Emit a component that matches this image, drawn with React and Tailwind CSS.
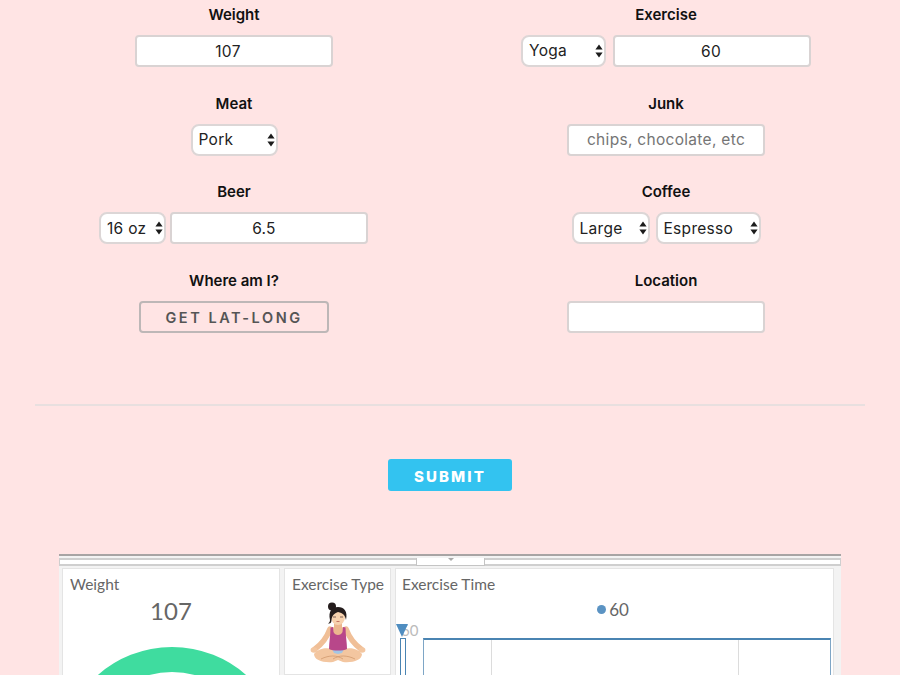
import React from 'react';

const inputClass = 'h-[32px] rounded-[4px] border-2 border-[#d9d3d3] bg-white text-center text-[15.5px] tracking-[0.3px] text-[#222] outline-none placeholder:text-[#757575]';

const Select = ({ value, width }) => (
  <div className={`relative h-[32px] ${width}`}>
    <select
      defaultValue={value}
      className="h-full w-full appearance-none rounded-[8px] border-2 border-[#dcd6d6] bg-white pl-[6px] text-[15.5px] tracking-[0.3px] text-[#222] outline-none"
    >
      <option>{value}</option>
    </select>
    <svg className="absolute right-[3px] top-[9px] h-[14px] w-[8px]" viewBox="0 0 8 14">
      <path d="M4 0.5 L7.6 5.5 L0.4 5.5 Z M4 13.5 L7.6 8.5 L0.4 8.5 Z" fill="#1c1c1c" />
    </svg>
  </div>
);

const Field = ({ label, children }) => (
  <div className="flex h-[88.67px] flex-col items-center">
    <label className="h-[35px] text-[15px] font-semibold leading-[29px] text-[#111]">{label}</label>
    <div className="flex items-center">{children}</div>
  </div>
);

const YogaGirl = () => (
  <svg className="h-[66px] w-[64px]" viewBox="0 0 64 66">
    {/* arms */}
    <path d="M25 30 C22 38 17 45 10 50" stroke="#f0bf97" strokeWidth="5.5" strokeLinecap="round" fill="none" />
    <path d="M41 30 C44 38 49 45 56 50" stroke="#f0bf97" strokeWidth="5.5" strokeLinecap="round" fill="none" />
    {/* legs */}
    <path d="M9 55 C16 47 26 49 33 52 C40 49 50 47 57 55 C57 61 48 64 38 63 L33 61 L28 63 C18 64 9 61 9 55 Z" fill="#f3c6a0" />
    <path d="M16 60 C24 56 32 56 38 60 M50 60 C42 56 34 56 28 60" stroke="#d29a70" strokeWidth="0.8" fill="none" />
    {/* hands */}
    <ellipse cx="9" cy="51" rx="3.4" ry="2.8" fill="#f3c6a0" />
    <ellipse cx="57" cy="51" rx="3.4" ry="2.8" fill="#f3c6a0" />
    {/* shorts */}
    <path d="M27 50 H39 L37 54 L33 55 L29 54 Z" fill="#a3c6e4" />
    {/* neck and chest */}
    <path d="M29 23 H37 V28 L41 30 V36 H25 V30 L29 28 Z" fill="#ecb78e" />
    {/* top */}
    <path d="M25.5 28.5 L28 28 L28.5 33 C30 37 36 37 37.5 33 L38 28 L40.5 28.5 C40.5 36 42 44 42 50 C38 52 28 52 24 50 C24 44 25.5 36 25.5 28.5 Z" fill="#b8478a" />
    {/* head */}
    <ellipse cx="33" cy="18" rx="7" ry="8" fill="#f7d2ae" />
    {/* hair */}
    <circle cx="27" cy="7.5" r="4" fill="#241c1c" />
    <path d="M25 21 C23 12 27 8 33 8 C39 8 43 12 41 21 C40 16 38 14 33 13 C30 14 27 16 26.5 21 C26.5 23 26 25 23 24.5 C24.5 23.5 25 22.5 25 21 Z" fill="#241c1c" />
    <path d="M28 18 h3 M35 18 h3" stroke="#4a3030" strokeWidth="0.7" />
    <path d="M31.5 22.5 h3" stroke="#c06a5a" strokeWidth="0.9" />
  </svg>
);

const Gauge = () => (
  <svg className="mt-[9px] h-[60px] w-[216px]" viewBox="0 0 216 60">
    <circle cx="109" cy="124" r="99.5" fill="none" stroke="#3fdc9f" strokeWidth="25" />
  </svg>
);

const App = () => {
  return (
    <div className="h-[675px] w-[900px] overflow-hidden bg-[#ffe4e4] font-['Inter','Liberation_Sans',sans-serif]">
      <div className="ml-[18px] grid w-[864px] grid-cols-2">
        <Field label="Weight">
          <input className={`${inputClass} w-[198px] pr-[12px]`} defaultValue="107" />
        </Field>
        <Field label="Exercise">
          <Select value="Yoga" width="w-[85px]" />
          <input className={`${inputClass} ml-[7px] w-[198px] pr-[2px]`} defaultValue="60" />
        </Field>
        <Field label="Meat">
          <Select value="Pork" width="w-[87px]" />
        </Field>
        <Field label="Junk">
          <input className={`${inputClass} w-[198px]`} placeholder="chips, chocolate, etc" />
        </Field>
        <Field label="Beer">
          <div className="-ml-[1px]">
            <Select value="16 oz" width="w-[67px]" />
          </div>
          <input className={`${inputClass} ml-[4px] w-[198px] pr-[10px]`} defaultValue="6.5" />
        </Field>
        <Field label="Coffee">
          <Select value="Large" width="w-[78px]" />
          <div className="ml-[6px]">
            <Select value="Espresso" width="w-[105px]" />
          </div>
        </Field>
        <Field label="Where am I?">
          <button className="h-[32px] w-[190px] rounded-[4px] border-2 border-[#bdb7b7] pt-[1px] text-[14.5px] font-semibold tracking-[2.55px] text-[#555]">
            GET LAT-LONG
          </button>
        </Field>
        <Field label="Location">
          <input className={`${inputClass} w-[198px]`} />
        </Field>
      </div>

      <div className="mx-[35px] mt-[49px] border-t-2 border-[#e8dfdf]" />

      <div className="mt-[53px] flex justify-center">
        <button className="h-[32px] w-[124px] rounded-[3px] bg-[#33c3f0] pt-[6px] text-[15px] font-extrabold tracking-[2.1px] text-white">
          SUBMIT
        </button>
      </div>

      {/* embedded dashboard */}
      <div className="ml-[59px] mt-[63px] h-[200px] w-[782px] border-t-2 border-[#a8a4a4] bg-[#f3f3f3] font-['Lato','Liberation_Sans',sans-serif]">
        <div className="relative mt-[2px] h-[8px] border-y-2 border-x border-[#cfcfcf] bg-white">
          <div className="absolute left-[356px] top-[-2px] h-[8px] w-[69px] border border-t-0 border-[#c4c4c4] bg-white">
            <div className="mx-auto h-0 w-0 border-x-[3px] border-t-[3px] border-x-transparent border-t-[#aaa]" />
          </div>
        </div>

        <div className="mt-[2px] flex gap-[4px] pl-[3px]">
          <div className="h-[180px] w-[218px] border border-[#e4e4e4] bg-white">
            <div className="pl-[7px] pt-[5px] text-[15.5px] leading-[20px] text-[#666]">Weight</div>
            <div className="mt-[2px] text-center text-[24px] leading-[30px] text-[#666]">107</div>
            <Gauge />
          </div>

          <div className="h-[107px] w-[107px] border border-[#e4e4e4] bg-white">
            <div className="pl-[7px] pt-[5px] text-[15.5px] leading-[20px] whitespace-nowrap text-[#666]">Exercise Type</div>
            <div className="mt-[5px] flex justify-center pr-[2px]">
              <YogaGirl />
            </div>
          </div>

          <div className="h-[180px] w-[439px] border border-[#e4e4e4] bg-white">
            <div className="pl-[6px] pt-[5px] text-[15.5px] leading-[20px] text-[#666]">Exercise Time</div>
            <div className="mt-[5px] flex items-center justify-center gap-[3px] pr-[3px] text-[17px] leading-[22px] text-[#666]">
              <span className="h-[9px] w-[9px] rounded-full bg-[#5b93c3]" />
              60
            </div>
            <div className="relative mt-[2px] h-[15px]">
              <span className="absolute left-[5px] top-[-2px] text-[15px] leading-[18px] text-[#bbb]">60</span>
              <svg className="absolute left-0 top-[1px] h-[13px] w-[12px]" viewBox="0 0 12 13">
                <path d="M0 0 H12 L6 13 Z" fill="#4f8dc0" />
              </svg>
            </div>
            <div className="ml-[4px] flex">
              <div className="h-[60px] w-[6px] border-x border-t border-[#4a84b2]" />
              <div className="ml-[17px] flex h-[60px] w-[408px] border-x border-t-2 border-x-[#7ea6c6] border-t-[#4a84b2]">
                <div className="w-[68px] border-r border-[#dcdcdc]" />
                <div className="w-[247px] border-r border-[#dcdcdc]" />
              </div>
            </div>
          </div>
        </div>
      </div>
    </div>
  );
};

export default App;
